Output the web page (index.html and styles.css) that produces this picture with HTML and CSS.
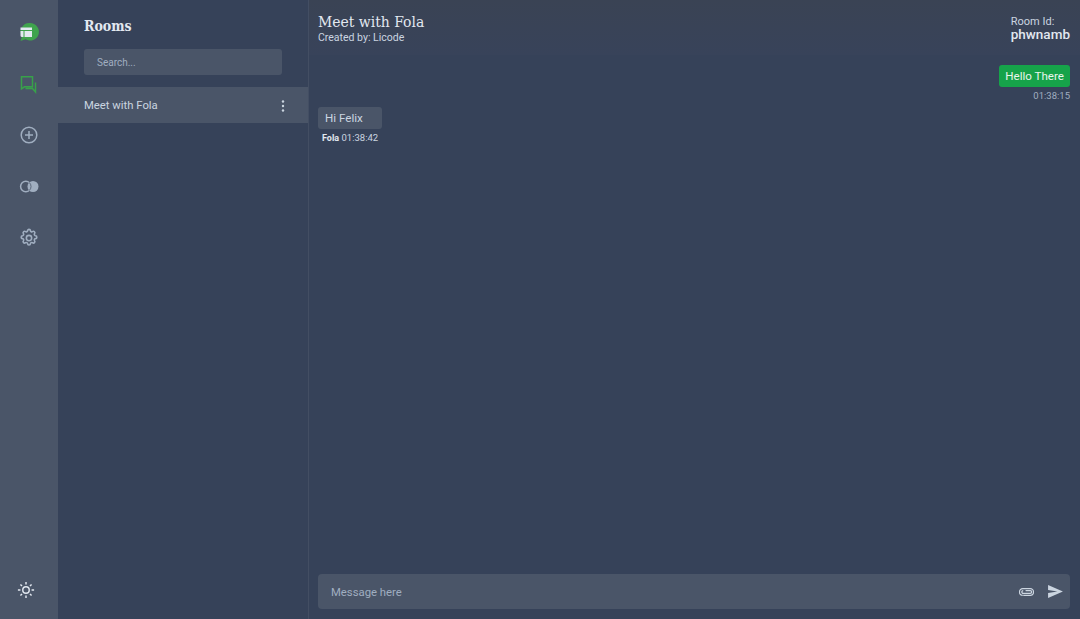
FILE: index.html
```html
<!DOCTYPE html>
<html lang="en">
<head>
<meta charset="utf-8">
<title>Meet with Fola</title>
<link rel="stylesheet" href="styles.css">
</head>
<body>
<div class="app">
  <nav class="rail">
    <div class="rail-top">
      <svg class="rail-icon" viewBox="0 0 20 20"><path class="logo-bg" d="M11 1a8.800 8.800 0 1 1-4.500 16.300L1.500 19l1.500-4.500A8.800 8.800 0 0 1 11 1z"/><path class="logo-fg" d="M1.500 5.500h11.500v2.500H1.500zM1.500 9h3v6H3a1.500 1.500 0 0 1-1.500-1.500zM5.500 9H13v6H5.500z"/></svg>
      <svg class="rail-icon green" viewBox="0 0 20 20"><path d="M2.500 2.800h11v10H5.500l-3 2zM16.500 8.500V18l-3-3.500H6.500"/></svg>
      <svg class="rail-icon" viewBox="0 0 20 20"><circle cx="10" cy="10" r="7.800"/><path d="M10 6v8M6 10h8"/></svg>
      <svg class="rail-icon" viewBox="0 0 20 20"><circle class="solid" cx="14" cy="9.500" r="5.500"/><circle class="ring" cx="6.800" cy="9.500" r="5.200"/><path class="cut" d="M10.200 5.400a5.500 5.500 0 0 1 0 8.200"/></svg>
      <svg class="rail-icon gear" viewBox="0 0 24 24"><path d="M10.300 3.300a1.700 1.700 0 0 1 3.400 0 1.700 1.700 0 0 0 2.500 1.100 1.700 1.700 0 0 1 2.400 2.400 1.700 1.700 0 0 0 1.100 2.500 1.700 1.700 0 0 1 0 3.400 1.700 1.700 0 0 0-1.100 2.500 1.700 1.700 0 0 1-2.400 2.400 1.700 1.700 0 0 0-2.500 1.100 1.700 1.700 0 0 1-3.400 0 1.700 1.700 0 0 0-2.500-1.100 1.700 1.700 0 0 1-2.400-2.400 1.700 1.700 0 0 0-1.100-2.500 1.700 1.700 0 0 1 0-3.400 1.700 1.700 0 0 0 1.100-2.500 1.700 1.700 0 0 1 2.400-2.400 1.700 1.700 0 0 0 2.500-1.100z"/><circle cx="12" cy="12" r="3.200"/></svg>
    </div>
    <svg class="theme-icon" viewBox="0 0 20 20"><circle cx="10" cy="10" r="3.600"/><path d="M10 1v2.800M10 16.200V19M1 10h2.800M16.200 10H19M3.800 3.800l1.800 1.800M14.400 14.400l1.800 1.800M3.800 16.200l1.800-1.800M14.400 5.600l1.800-1.800"/></svg>
  </nav>

  <aside class="rooms">
    <h2 class="rooms-title">Rooms</h2>
    <div class="search">Search...</div>
    <div class="room-row">
      <span>Meet with Fola</span>
      <svg class="dots" viewBox="0 0 4 14"><circle cx="2" cy="2.500" r="1.200"/><circle cx="2" cy="7" r="1.200"/><circle cx="2" cy="11.500" r="1.200"/></svg>
    </div>
  </aside>

  <main class="chat">
    <header class="chat-head">
      <div>
        <h1 class="chat-title">Meet with Fola</h1>
        <p class="chat-sub">Created by: Licode</p>
      </div>
      <div class="room-id">
        <span>Room Id:</span>
        <strong>phwnamb</strong>
      </div>
    </header>
    <section class="messages">
      <div class="msg mine">
        <div class="bubble green-bubble">Hello There</div>
        <div class="meta">01:38:15</div>
      </div>
      <div class="msg theirs">
        <div class="bubble grey-bubble">Hi Felix</div>
        <div class="meta meta-in"><b>Fola</b> 01:38:42</div>
      </div>
    </section>
    <footer class="composer">
      <span class="placeholder">Message here</span>
      <svg class="clip" viewBox="0 0 16 10"><path d="M4.500 8.500h7.500a3.500 3.500 0 0 0 0-7H4a3.500 3.500 0 0 0 0 7M4.500 3.500a1.500 1.500 0 0 0 0 3h7.500a1.500 1.500 0 0 0 0-3H7"/></svg>
      <svg class="send" viewBox="0 0 16 14"><path d="M0 0l16 7L0 14V8.500L10 7 0 5.500z"/></svg>
    </footer>
  </main>
</div>
</body>
</html>
```
FILE: styles.css
```css
* { box-sizing: border-box; }
html, body { margin: 0; height: 100%; }
body { font-family: Roboto, sans-serif; color: #cbd5e0; background: #364259; overflow: hidden; }
.app { display: flex; height: 619px; }

.rail { width: 58px; flex: none; background: #4a5568; display: flex; flex-direction: column; justify-content: space-between; align-items: center; padding: 22px 0 20px; }
.rail-top { display: flex; flex-direction: column; align-items: center; gap: 31.500px; }
.rail-icon { width: 20px; height: 20px; display: block; fill: none; stroke: #a0aec0; stroke-width: 1.500; }
.rail-icon.green { stroke: #38a14a; stroke-width: 1.500; }
.rail-icon.gear { stroke-width: 1.900; }
.rail-icon .solid { fill: #a0aec0; stroke: none; }
.rail-icon .ring { fill: none; }
.rail-icon .cut { stroke: #4a5568; stroke-width: 0.800; }
.logo-bg { fill: #3fa34d; stroke: none; }
.logo-fg { fill: #e2e8f0; stroke: none; }
.theme-icon { width: 18px; height: 18px; margin-left: -6px; fill: none; stroke: #e2e8f0; stroke-width: 1.600; }

.rooms { width: 251px; flex: none; border-right: 1px solid #434e63; }
.rooms-title { margin: 16px 0 0 26px; font: 700 14px/20px "DejaVu Serif Condensed", "DejaVu Serif", serif; color: #e2e8f0; }
.search { margin: 13px 26px 0; width: 198px; height: 26px; padding-left: 13px; background: #4a5568; border-radius: 3px; font-size: 10px; line-height: 27px; color: #a0aec0; }
.room-row { margin-top: 12px; height: 36px; padding: 1px 23px 0 26px; background: #4a5568; display: flex; align-items: center; justify-content: space-between; font-size: 11.300px; color: #cbd5e0; }
.dots { width: 4px; height: 14px; fill: #cbd5e0; }

.chat { flex: 1; min-width: 0; display: flex; flex-direction: column; padding: 0 10px 10px 9px; }
.chat-head { margin: 0 -10px 0 -9px; padding: 13px 10px 0 9px; height: 55px; flex: none; display: flex; justify-content: space-between; background: linear-gradient(#3a4354, #38435a); }
.chat-title { margin: 0; font: 400 15.500px/18px "DejaVu Serif Condensed", "DejaVu Serif", serif; color: #e2e8f0; }
.chat-sub { margin: 1px 0 0; font-size: 10.500px; line-height: 12px; color: #cbd5e0; }
.room-id { display: flex; flex-direction: column; align-items: flex-start; padding-top: 3px; font-size: 11px; line-height: 12px; }
.room-id strong { font-size: 13.500px; line-height: 12px; font-weight: 500; color: #e2e8f0; }

.messages { flex: 1; display: flex; flex-direction: column; padding-top: 10px; }
.msg { display: flex; flex-direction: column; }
.mine { align-items: flex-end; }
.theirs { align-items: flex-start; margin-top: 5px; }
.bubble { height: 22px; padding: 0 6px; border-radius: 3px; font-size: 11.600px; line-height: 23px; }
.green-bubble { background: #16a34a; color: #e8f5ec; }
.grey-bubble { width: 64px; padding-left: 7px; background: #4a5568; color: #cbd5e0; }
.meta { margin-top: 3px; font-size: 9.500px; line-height: 12px; color: #a0aec0; }
.meta-in { padding-left: 4px; color: #cbd5e0; }
.meta-in b { font-weight: 700; color: #e2e8f0; font-size: 9px; }

.composer { height: 35px; flex: none; background: #4a5568; border-radius: 4px; display: flex; align-items: center; padding: 0 7px 0 13px; }
.placeholder { flex: 1; padding-top: 1px; font-size: 11.300px; color: #a0aec0; }
.clip { width: 15px; height: 10px; fill: none; stroke: #cbd5e0; stroke-width: 1.300; margin-right: 14px; }
.send { width: 15px; height: 13px; fill: #cbd5e0; }
```
